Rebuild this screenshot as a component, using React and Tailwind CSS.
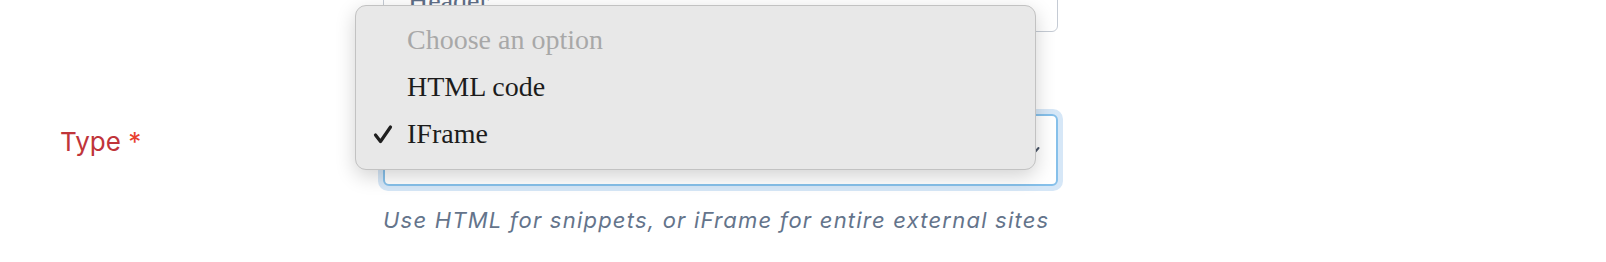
const options = [
  { label: "Choose an option", placeholder: true },
  { label: "HTML code" },
  { label: "IFrame", selected: true },
];

function Check() {
  return (
    <svg width="20" height="20" viewBox="0 0 20 20" fill="none">
      <path d="M2.5 11 L7.5 17.5 L17.5 3" stroke="#1f1f1f" strokeWidth="3.2" strokeLinecap="round" strokeLinejoin="round" />
    </svg>
  );
}

export default function App() {
  return (
    <div className="relative w-[1606px] h-[262px] overflow-hidden bg-white">
      {/* field above, scrolled mostly out of view */}
      <div className="pl-[383px] -mt-[30px]">
        <div className="w-[675px] h-[62px] rounded-[6px] border border-[#c5cbd4] bg-white flex items-end pl-[24px] pb-[16px]">
          <span className="text-[28px] leading-none text-[#5f6f88]" style={{ fontFamily: '"Liberation Serif", serif' }}>
            Header
          </span>
        </div>
      </div>

      <div className="flex mt-[77px]">
        <div className="w-[378px] pl-[60px] pt-[13px]">
          <span className="text-[26px] text-[#c0343a]" style={{ fontFamily: "Inter, sans-serif" }}>
            Type <span className="text-[#e8402f]">*</span>
          </span>
        </div>
        <div className="flex flex-col">
          <div className="rounded-[10px] p-[5px] bg-[#d6e7f7]">
            <div className="w-[675px] h-[72px] rounded-[6px] border-2 border-[#86c0ea] bg-white flex items-center justify-end pr-[16px]">
              <svg width="10" height="8" viewBox="0 0 10 8" fill="none">
                <path d="M1.5 2 L5 6 L8.5 2" stroke="#4a5568" strokeWidth="2" strokeLinecap="round" strokeLinejoin="round" />
              </svg>
            </div>
          </div>
          <p className="mt-[13px] pl-[5px] text-[22px] italic tracking-[0.055em] text-[#64748b]" style={{ fontFamily: "Inter, sans-serif" }}>
            Use HTML for snippets, or iFrame for entire external sites
          </p>
        </div>
      </div>

      {/* open select menu */}
      <div
        className="absolute left-[355px] top-[5px] w-[681px] rounded-[11px] border border-[#c2c2c2] bg-[#e8e8e8] pt-[10px] pb-[12px] shadow-[0_6px_20px_rgba(0,0,0,0.18)]"
        style={{ fontFamily: '"Liberation Serif", serif' }}
      >
        {options.map((o) => (
          <div key={o.label} className="h-[47px] flex items-center pl-[17px]">
            <span className="w-[34px] flex">{o.selected && <Check />}</span>
            <span className={`text-[28px] leading-none ${o.placeholder ? "text-[#a8a8a8]" : "text-[#1c1c1c]"}`}>
              {o.label}
            </span>
          </div>
        ))}
      </div>
    </div>
  );
}
